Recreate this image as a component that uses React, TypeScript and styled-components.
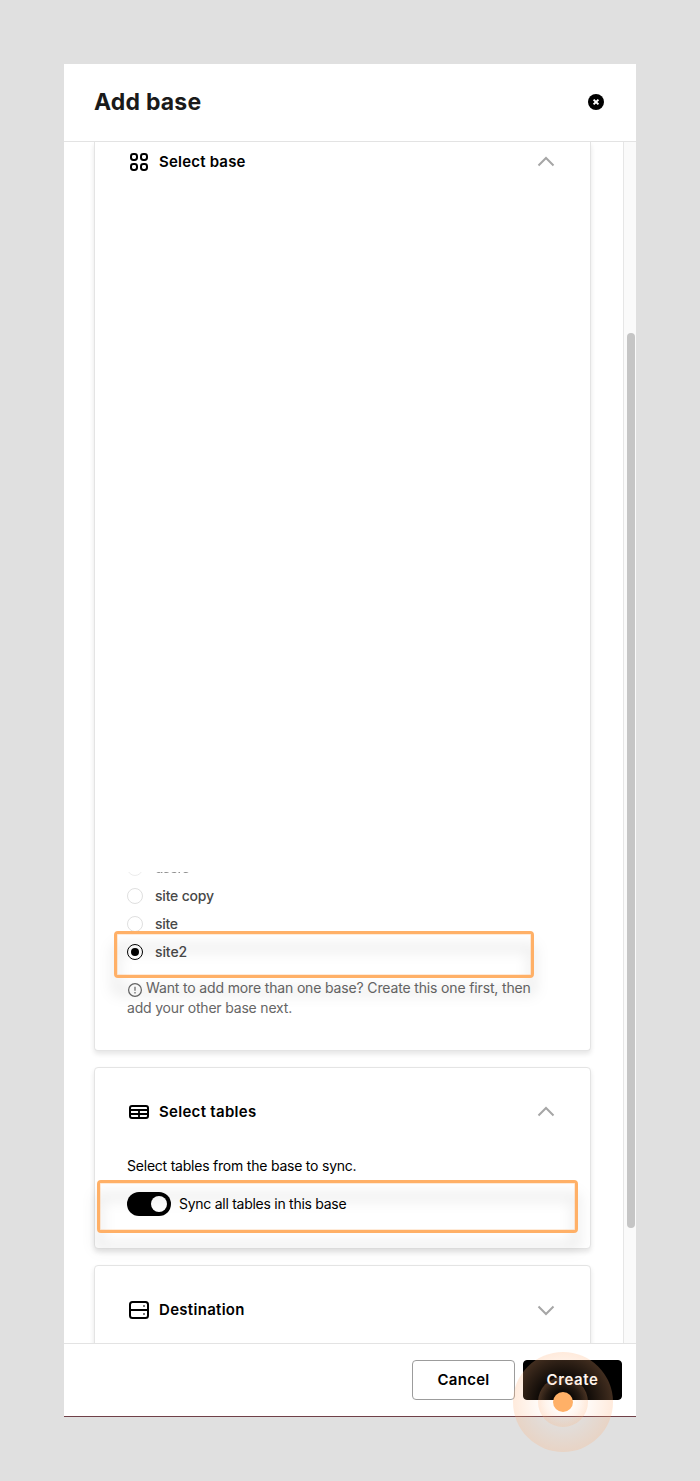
import React from "react";
import styled, { createGlobalStyle } from "styled-components";

const GlobalStyle = createGlobalStyle`
  * { box-sizing: border-box; }
  body { margin: 0; background: #e0e0e0; font-family: Inter, "Liberation Sans", sans-serif; }
`;

const Page = styled.main`
  height: 1481px;
  padding: 64px;
  overflow: hidden;
`;

const Modal = styled.section`
  position: relative;
  display: flex;
  flex-direction: column;
  height: 1353px;
  background: #fff;
  border-bottom: 1px solid #704048;
`;

const ModalHeader = styled.header`
  display: flex;
  align-items: center;
  justify-content: space-between;
  height: 78px;
  padding: 0 32px 2px 30px;
  border-bottom: 1px solid #e3e3e3;
`;

const Title = styled.h1`
  margin: 0;
  font-size: 23px;
  font-weight: 700;
  letter-spacing: 0.2px;
  color: #1a1a1a;
`;

const CloseButton = styled.button`
  display: flex;
  padding: 0;
  border: 0;
  background: none;
`;

const Body = styled.div`
  display: flex;
  height: 1201px;
  overflow: hidden;
`;

const Content = styled.div`
  flex: 1;
  padding: 0 32px 0 30px;
`;

const ScrollTrack = styled.div`
  width: 13px;
  padding: 191px 1px 0 3px;
  border-left: 1px solid #e6e6e6;
  background: #fafafa;
`;

const ScrollThumb = styled.div`
  height: 895px;
  border-radius: 4px;
  background: #c5c5c5;
`;

const Card = styled.article<{ $continued?: boolean }>`
  position: relative;
  display: flex;
  flex-direction: column;
  height: ${(p) => (p.$continued ? "909px" : "182px")};
  margin-bottom: 16px;
  padding: ${(p) => (p.$continued ? "8px 32px 32px" : "32px")};
  border: 1px solid #e4e4e4;
  border-top-width: ${(p) => (p.$continued ? "0" : "1px")};
  border-radius: ${(p) => (p.$continued ? "0 0 4px 4px" : "4px")};
  background: #fff;
  box-shadow: 0 3px 5px rgba(0, 0, 0, 0.1);
`;

const CardHeader = styled.div`
  display: flex;
  align-items: center;
  gap: 8px;
  height: 24px;
`;

const CardTitle = styled.h2<{ $spacing: number }>`
  flex: 1;
  margin: 0;
  font-size: 15px;
  line-height: 24px;
  font-weight: 600;
  letter-spacing: ${(p) => p.$spacing}px;
  color: #000;
`;

const RadioList = styled.div`
  display: flex;
  flex-direction: column;
  justify-content: flex-end;
  height: 94px;
  margin-top: auto;
  margin-bottom: 12px;
  overflow: hidden;
`;

const RadioRow = styled.label<{ $faded?: boolean }>`
  display: flex;
  flex: none;
  align-items: center;
  gap: 12px;
  height: 28px;
  font-size: 14px;
  font-weight: 500;
  color: #484848;
  opacity: ${(p) => (p.$faded ? 0.6 : 1)};
`;

const RadioLabel = styled.span<{ $spacing: number }>`
  padding-bottom: 2px;
  letter-spacing: ${(p) => p.$spacing}px;
`;

const RadioMark = styled.span<{ $checked?: boolean }>`
  display: grid;
  place-items: center;
  width: 16px;
  height: 16px;
  border: 1px solid ${(p) => (p.$checked ? "#000" : "#dfdfdf")};
  border-radius: 50%;

  &::after {
    content: "";
    width: 8px;
    height: 8px;
    border-radius: 50%;
    background: ${(p) => (p.$checked ? "#000" : "transparent")};
  }
`;

const Note = styled.p`
  margin: 0;
  font-size: 14px;
  line-height: 20px;
  color: #666;
  white-space: nowrap;

  svg { margin-right: 3px; vertical-align: -4px; }
`;

const TextRun = styled.span<{ $spacing: number }>`
  letter-spacing: ${(p) => p.$spacing}px;
`;

const Description = styled.p`
  margin: 32px 0 16px;
  font-size: 14px;
  line-height: 20px;
  color: #000;
`;

const SwitchRow = styled.label`
  display: flex;
  align-items: center;
  gap: 8px;
  height: 24px;
  font-size: 14px;
  line-height: 20px;
  color: #000;
`;

const Switch = styled.span`
  display: flex;
  justify-content: flex-end;
  width: 44px;
  height: 24px;
  padding: 4px;
  border-radius: 12px;
  background: #000;

  &::after {
    content: "";
    width: 16px;
    height: 16px;
    border-radius: 50%;
    background: #fff;
  }
`;

const Highlight = styled.div<{ $x: number; $y: number; $w: number; $h: number }>`
  position: absolute;
  left: ${(p) => p.$x}px;
  top: ${(p) => p.$y}px;
  width: ${(p) => p.$w}px;
  height: ${(p) => p.$h}px;
  border: 3px solid #ffb067;
  border-radius: 4px;
  outline: 1px solid rgba(255, 176, 103, 0.25);
  outline-offset: -4px;
  filter: drop-shadow(0 15px 7px rgba(0, 0, 0, 0.19));
  pointer-events: none;
`;

const Footer = styled.footer`
  display: flex;
  align-items: center;
  justify-content: flex-end;
  gap: 8px;
  height: 73px;
  padding-right: 14px;
  border-top: 1px solid #e3e3e3;
`;

const Button = styled.button<{ $primary?: boolean }>`
  width: ${(p) => (p.$primary ? 99 : 103)}px;
  height: 40px;
  padding: 0 0 2px;
  border: 1px solid ${(p) => (p.$primary ? "#000" : "#9c9c9c")};
  border-radius: 4px;
  background: ${(p) => (p.$primary ? "#000" : "#fff")};
  color: ${(p) => (p.$primary ? "#fff" : "#000")};
  font: 600 15px Inter, "Liberation Sans", sans-serif;
  letter-spacing: ${(p) => (p.$primary ? 0.6 : 0.3)}px;
`;

const Pulse = styled.div`
  position: absolute;
  left: 449px;
  top: 1288px;
  display: grid;
  place-items: center;
  width: 100px;
  height: 100px;
  border-radius: 50%;
  background: radial-gradient(circle closest-side, rgba(255, 176, 120, 0) 35%, rgba(255, 176, 120, 0.26) 100%);
  pointer-events: none;
`;

const PulseRing = styled.div`
  display: grid;
  place-items: center;
  width: 50px;
  height: 50px;
  border-radius: 50%;
  background: radial-gradient(circle closest-side, rgba(255, 176, 120, 0) 25%, rgba(255, 176, 120, 0.24) 100%);
`;

const PulseDot = styled.div`
  width: 20px;
  height: 20px;
  border-radius: 50%;
  background: #ffb067;
`;

const Chevron = ({ down }: { down?: boolean }) => (
  <svg width="24" height="24" viewBox="0 0 24 24" fill="none" stroke="#a6a6a6" strokeWidth="2">
    <path d={down ? "M4.5 8.5 12 16l7.5-7.5" : "M4.5 15.5 12 8l7.5 7.5"} />
  </svg>
);

const GridIcon = () => (
  <svg width="24" height="24" viewBox="0 0 24 24" fill="none" stroke="#000" strokeWidth="2">
    <rect x="4" y="4" width="6" height="6" rx="2.4" />
    <rect x="14" y="4" width="6" height="6" rx="2.4" />
    <rect x="4" y="14" width="6" height="6" rx="2.4" />
    <rect x="14" y="14" width="6" height="6" rx="2.4" />
  </svg>
);

const TableIcon = () => (
  <svg width="24" height="24" viewBox="0 0 24 24" fill="none" stroke="#000" strokeWidth="2">
    <rect x="3" y="6" width="18" height="12" rx="2" />
    <path d="M3 10h18M3 14h18M12 10v8" strokeWidth="1.8" />
  </svg>
);

const ServerIcon = () => (
  <svg width="24" height="24" viewBox="0 0 24 24" fill="none" stroke="#000" strokeWidth="2">
    <rect x="3" y="4" width="18" height="16" rx="2.5" />
    <path d="M3 12h18" />
    <path d="M16 8h2M16 16h2" stroke="#777" />
  </svg>
);

export default function App() {
  return (
    <Page>
      <GlobalStyle />
      <Modal>
        <ModalHeader>
          <Title>Add base</Title>
          <CloseButton aria-label="Close">
            <svg width="16" height="16" viewBox="0 0 16 16">
              <circle cx="8" cy="8" r="8" fill="#000" />
              <path d="m5.6 5.6 4.8 4.8m0-4.8-4.8 4.8" stroke="#fff" strokeWidth="2" />
            </svg>
          </CloseButton>
        </ModalHeader>
        <Body>
          <Content>
            <Card $continued>
              <CardHeader>
                <GridIcon />
                <CardTitle $spacing={0.2}>Select base</CardTitle>
                <Chevron />
              </CardHeader>
              <RadioList>
                <RadioRow $faded>
                  <RadioMark />
                  <RadioLabel $spacing={-0.6}>users</RadioLabel>
                </RadioRow>
                <RadioRow>
                  <RadioMark />
                  <RadioLabel $spacing={-0.2}>site copy</RadioLabel>
                </RadioRow>
                <RadioRow>
                  <RadioMark />
                  <RadioLabel $spacing={-0.3}>site</RadioLabel>
                </RadioRow>
                <RadioRow>
                  <RadioMark $checked />
                  <RadioLabel $spacing={-0.1}>site2</RadioLabel>
                </RadioRow>
              </RadioList>
              <Note>
                <svg width="16" height="16" viewBox="0 0 16 16" fill="none" stroke="#666" strokeWidth="1.2">
                  <circle cx="8" cy="9" r="6.4" />
                  <path d="M8 5.7v4M8 11v1.4" />
                </svg>
                <TextRun $spacing={-0.15}>Want to add more than one base? Create this one first, then</TextRun>
                <br />
                <TextRun $spacing={-0.19}>add your other base next.</TextRun>
              </Note>
              <Highlight $x={19} $y={789} $w={420} $h={47} />
            </Card>
            <Card>
              <CardHeader>
                <TableIcon />
                <CardTitle $spacing={0.3}>Select tables</CardTitle>
                <Chevron />
              </CardHeader>
              <Description>
                <TextRun $spacing={-0.22}>Select tables from the base to sync.</TextRun>
              </Description>
              <SwitchRow>
                <Switch />
                <TextRun $spacing={-0.27}>Sync all tables in this base</TextRun>
              </SwitchRow>
              <Highlight $x={2} $y={112} $w={481} $h={53} />
            </Card>
            <Card>
              <CardHeader>
                <ServerIcon />
                <CardTitle $spacing={0.3}>Destination</CardTitle>
                <Chevron down />
              </CardHeader>
            </Card>
          </Content>
          <ScrollTrack>
            <ScrollThumb />
          </ScrollTrack>
        </Body>
        <Footer>
          <Button>Cancel</Button>
          <Button $primary>Create</Button>
        </Footer>
        <Pulse>
          <PulseRing>
            <PulseDot />
          </PulseRing>
        </Pulse>
      </Modal>
    </Page>
  );
}
